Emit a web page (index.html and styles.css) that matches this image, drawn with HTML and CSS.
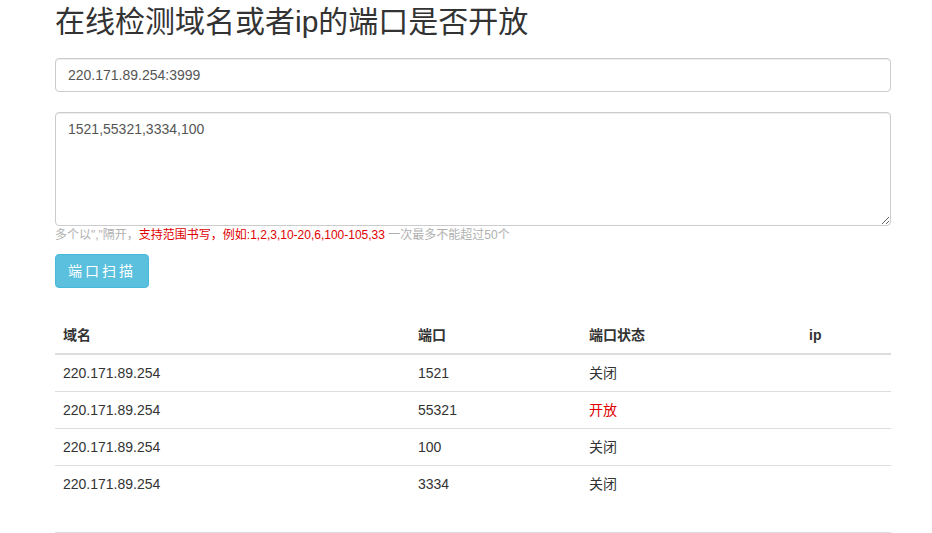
FILE: index.html
```html
<!DOCTYPE html>
<html lang="zh-CN">
<head>
<meta charset="utf-8">
<title>端口检测</title>
<link rel="stylesheet" href="styles.css">
</head>
<body>
<div class="container">
  <h2 class="title">在线检测域名或者ip的端口是否开放</h2>
  <form class="scan-form">
    <input class="form-control" type="text" value="220.171.89.254:3999">
    <textarea class="form-control area">1521,55321,3334,100</textarea>
    <p class="help">多个以","隔开，<span class="red">支持范围书写，例如:1,2,3,10-20,6,100-105,33</span> 一次最多不能超过50个</p>
    <button type="button" class="btn">端口扫描</button>
  </form>
  <table class="result">
    <thead>
      <tr><th class="c1">域名</th><th class="c2">端口</th><th class="c3">端口状态</th><th class="c4">ip</th></tr>
    </thead>
    <tbody>
      <tr><td>220.171.89.254</td><td>1521</td><td>关闭</td><td></td></tr>
      <tr><td>220.171.89.254</td><td>55321</td><td class="red">开放</td><td></td></tr>
      <tr><td>220.171.89.254</td><td>100</td><td>关闭</td><td></td></tr>
      <tr><td>220.171.89.254</td><td>3334</td><td>关闭</td><td></td></tr>
    </tbody>
  </table>
  <hr class="rule">
</div>
</body>
</html>
```
FILE: styles.css
```css
html, body {
  margin: 0;
  padding: 0;
  background: #fff;
}
body {
  font-family: "Liberation Sans", Arial, "Noto Sans CJK SC", sans-serif;
  font-size: 14px;
  line-height: 20px;
  color: #333;
}
.container {
  margin-left: 55px;
  width: 836px;
}
.title {
  margin: 5px 0 0 0;
  font-size: 30px;
  line-height: 33px;
  font-weight: normal;
  color: #333;
}
.scan-form {
  display: flex;
  flex-direction: column;
  align-items: flex-start;
  margin-top: 20px;
}
.form-control {
  box-sizing: border-box;
  width: 100%;
  height: 34px;
  padding: 6px 12px;
  font-family: inherit;
  font-size: 14px;
  line-height: 20px;
  color: #555;
  background: #fff;
  border: 1px solid #ccc;
  border-radius: 4px;
  box-shadow: inset 0 1px 1px rgba(0,0,0,.075);
  margin: 0;
}
.area {
  height: 114px;
  margin-top: 20px;
  resize: vertical;
  display: block;
}
.help {
  margin: 1px 0 0 0;
  font-size: 12px;
  line-height: 17px;
  color: #b0b0b0;
}
.red {
  color: #e00000;
}
.btn {
  margin-top: 10px;
  box-sizing: border-box;
  height: 34px;
  width: 94px;
  padding: 6px 8px 6px 12px;
  text-align: left;
  font-family: inherit;
  font-size: 14px;
  line-height: 20px;
  letter-spacing: 3px;
  color: #fff;
  background: #5bc0de;
  border: 1px solid #46b8da;
  border-radius: 4px;
}
.result {
  width: 100%;
  border-collapse: collapse;
  margin-top: 31px;
}
.result th, .result td {
  padding: 8px;
  text-align: left;
  vertical-align: top;
  line-height: 20px;
}
.result th {
  font-weight: bold;
  border-bottom: 2px solid #ddd;
  padding-top: 6px;
  padding-bottom: 8px;
}
.result td {
  border-top: 1px solid #ddd;
}
.result tbody tr:first-child td {
  border-top: 0;
}
.c1 { width: 339px; }
.c2 { width: 155px; }
.c3 { width: 204px; }
.rule {
  margin: 30px 0 0 0;
  border: 0;
  border-top: 1px solid #ddd;
}
```
